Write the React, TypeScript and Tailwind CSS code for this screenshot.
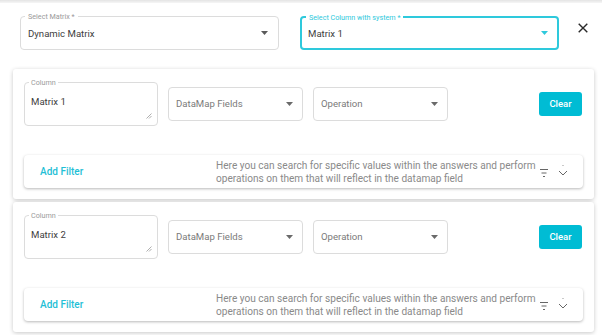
import React from "react";

const font = { fontFamily: "Roboto, 'Noto Sans', sans-serif" };

function Arrow({ color }: { color: string }) {
  return (
    <svg width="7" height="4" viewBox="0 0 7 4" className="shrink-0">
      <path d="M0 0 L7 0 L3.5 4 Z" fill={color} />
    </svg>
  );
}

function TopSelect({ label, value, active }: { label: string; value: string; active?: boolean }) {
  return (
    <div
      className={
        "relative w-[259px] h-[34px] rounded-[4px] flex items-center pl-[6px] pr-[9px] " +
        (active ? "border-2 border-[#2ec9dc]" : "border border-[#dcdcdc] pl-[7px] pr-[10px]")
      }
    >
      <span
        className={
          "absolute left-[4px] top-[-5px] bg-white px-[3px] text-[7.2px] leading-[9px] " +
          (active ? "text-[#2ec9dc]" : "text-[#9a9a9a]")
        }
      >
        {label}
      </span>
      <span className="flex-1 pt-[3px] text-[9.6px] text-[#404040]">{value}</span>
      <Arrow color={active ? "#2ec9dc" : "#5a5a5a"} />
    </div>
  );
}

function ColumnArea({ value }: { value: string }) {
  return (
    <div className="relative w-[134px] h-[44px] rounded-[4px] border border-[#dcdcdc] shrink-0">
      <span className="absolute left-[4px] top-[-5px] bg-white px-[2px] text-[7.2px] leading-[9px] text-[#9a9a9a]">
        Column
      </span>
      <div className="pl-[6px] pt-[13px] text-[9.6px] leading-[12px] text-[#404040]">{value}</div>
      <svg width="6" height="6" viewBox="0 0 6 6" className="absolute right-[5px] bottom-[6px]">
        <path d="M5.5 0.5 L0.5 5.5 M5.5 3 L3 5.5" stroke="#9a9a9a" strokeWidth="0.8" />
      </svg>
    </div>
  );
}

function Select({ placeholder }: { placeholder: string }) {
  return (
    <div className="w-[135px] h-[34px] rounded-[4px] border border-[#dcdcdc] flex items-center pl-[7px] pr-[9px] shrink-0">
      <span className="flex-1 pt-[1px] text-[9.6px] text-[#7a7a7a]">{placeholder}</span>
      <Arrow color="#6a6a6a" />
    </div>
  );
}

function FilterPanel() {
  return (
    <div className="h-[33px] rounded-[4px] bg-white shadow-[0_1px_3px_rgba(0,0,0,0.28)] flex items-center pl-[16px]">
      <div className="w-[176px] shrink-0 text-[10px] font-medium text-[#1fc0d6]">Add Filter</div>
      <div className="w-[320px] shrink-0 text-[10.1px] leading-[13px] text-[#8a8a8a] whitespace-nowrap">
        Here you can search for specific values within the answers and perform
        <br />
        operations on them that will reflect in the datamap field
      </div>
      <svg width="10" height="10" viewBox="0 0 10 10" className="ml-[3px] mt-[3px] shrink-0">
        <path d="M1 1.5 H9 M2.5 5 H7.5 M4 8.5 H6" stroke="#666" strokeWidth="1" />
      </svg>
      <svg width="12" height="16" viewBox="0 0 12 16" className="ml-[8px] shrink-0">
        <circle cx="6" cy="1.5" r="0.6" fill="#888" />
        <path d="M2 7 L6 11 L10 7" stroke="#666" strokeWidth="1" fill="none" />
      </svg>
    </div>
  );
}

function Card({ value }: { value: string }) {
  return (
    <div className="bg-white rounded-[3px] shadow-[0_1px_4px_rgba(0,0,0,0.22)] pt-[13px] px-[11px] pb-[11px]">
      <div className="flex items-center gap-[10px]">
        <ColumnArea value={value} />
        <Select placeholder="DataMap Fields" />
        <Select placeholder="Operation" />
        <div className="ml-auto mr-[1px] w-[43px] h-[24px] rounded-[3px] bg-[#00bcd4] text-white text-[9.5px] font-medium flex items-center justify-center">
          Clear
        </div>
      </div>
      <div className="mt-[29px]">
        <FilterPanel />
      </div>
    </div>
  );
}

export default function App() {
  return (
    <div className="w-[602px] h-[335px] overflow-hidden bg-white relative" style={font}>
      <div className="h-[3px] bg-gradient-to-b from-[#e4e4e4] to-[#f6f6f6]" />
      <div className="flex items-center pl-[20px] pt-[13px]">
        <TopSelect label="Select Matrix *" value="Dynamic Matrix" />
        <div className="w-[21px]" />
        <TopSelect label="Select Column with system *" value="Matrix 1" active />
        <svg width="10" height="10" viewBox="0 0 10 10" className="ml-[19px] mt-[-11px]">
          <path d="M0.7 0.7 L9.3 9.3 M9.3 0.7 L0.7 9.3" stroke="#2a2a2a" strokeWidth="1.4" />
        </svg>
      </div>
      <div className="flex flex-col gap-[3px] pl-[13px] pr-[8px] mt-[19px]">
        <Card value="Matrix 1" />
        <Card value="Matrix 2" />
      </div>
    </div>
  );
}
